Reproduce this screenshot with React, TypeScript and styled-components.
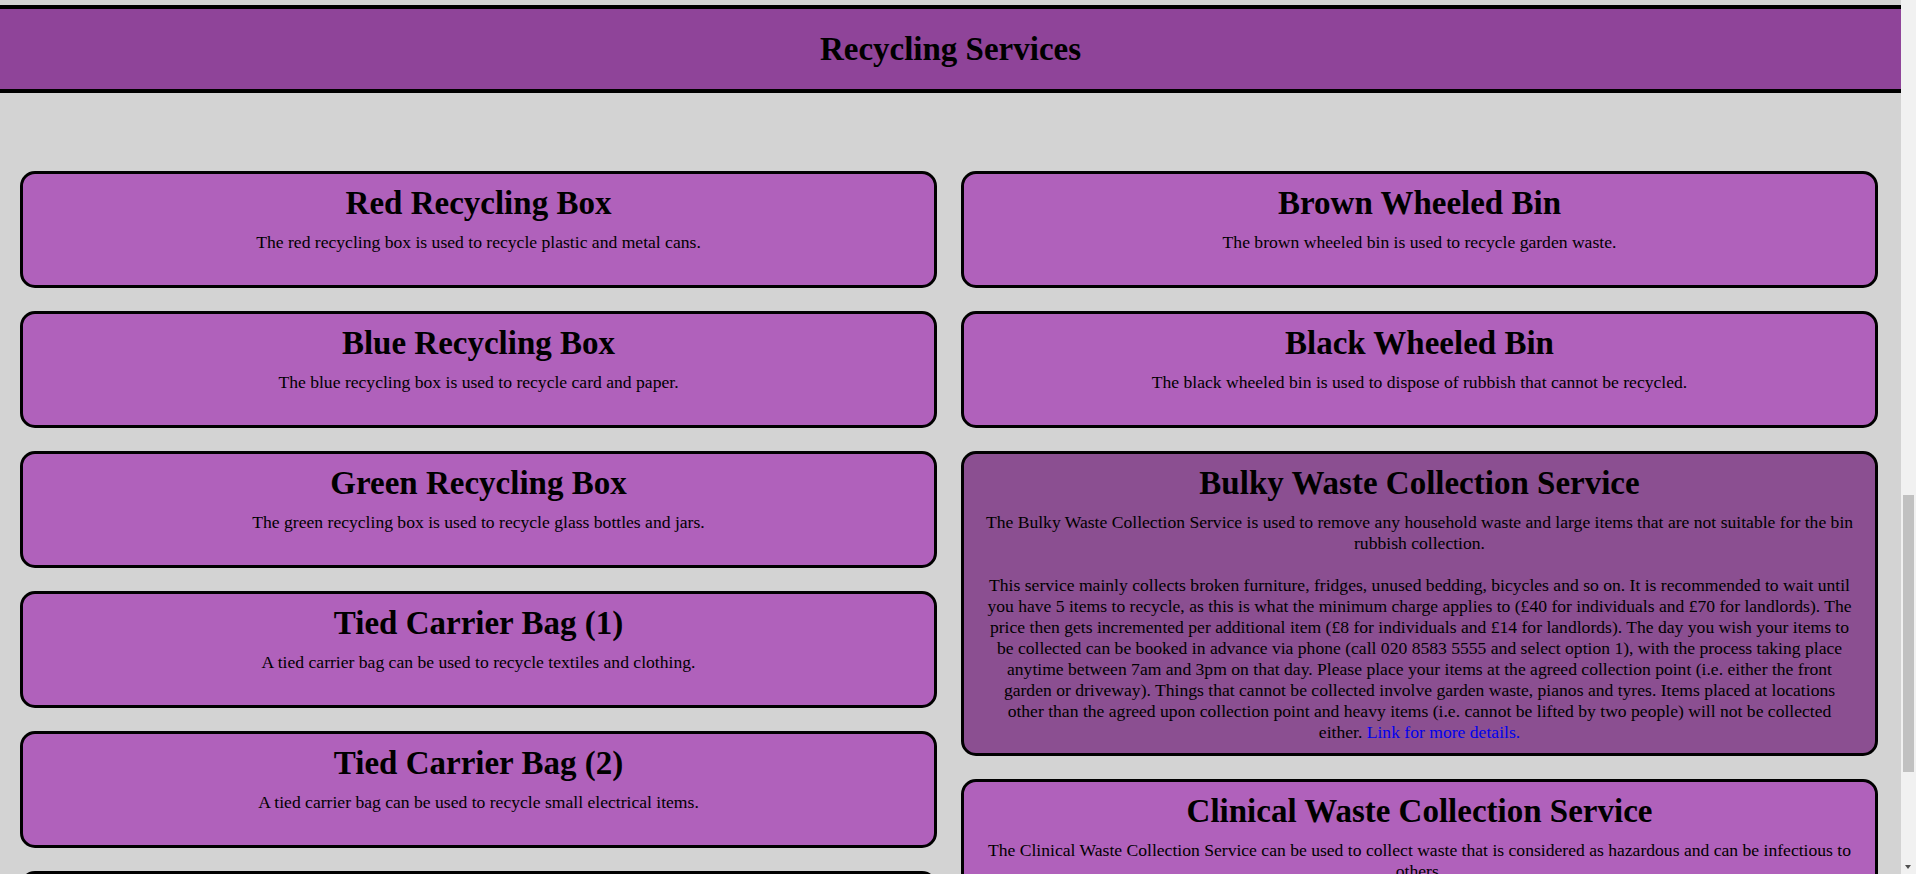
import React from "react";
import styled, { createGlobalStyle } from "styled-components";

const GlobalStyle = createGlobalStyle`
  html, body {
    margin: 0;
    padding: 0;
    background: #d3d3d3;
  }
  body {
    font-family: "Liberation Serif", "Times New Roman", serif;
    color: #000;
  }
`;

const Page = styled.div`
  padding-top: 5px;
  padding-right: 15px;
`;

const Header = styled.header`
  background: #8f4499;
  border-top: 4px solid #000;
  border-bottom: 4px solid #000;
  height: 80px;
  display: flex;
  align-items: center;
  justify-content: center;
`;

const HeaderTitle = styled.h1`
  margin: 0;
  font-size: 33px;
  font-weight: bold;
  line-height: 1;
`;

const Grid = styled.main`
  display: grid;
  grid-template-columns: 1fr 1fr;
  column-gap: 24px;
  align-items: start;
  padding: 78px 23px 40px 20px;
`;

const Column = styled.div`
  display: flex;
  flex-direction: column;
  gap: 23px;
`;

const Card = styled.section<{ $dark?: boolean }>`
  box-sizing: border-box;
  min-height: 117px;
  background: ${(p) => (p.$dark ? "#8b4f91" : "#b061bb")};
  border: 3px solid #000;
  border-radius: 15px;
  padding: 10px 20px 10px;
  text-align: center;
`;

const CardTitle = styled.h2`
  margin: 0 0 10px;
  font-size: 33px;
  line-height: 38px;
  font-weight: bold;
`;

const CardText = styled.p`
  margin: 0;
  font-size: 17.6px;
  line-height: 21px;
`;

const Gap = styled.span`
  display: block;
  height: 21px;
`;

const MoreLink = styled.a`
  color: #0000ee;
  text-decoration: none;
`;

const ScrollTrack = styled.div`
  position: fixed;
  top: 0;
  right: 0;
  width: 15px;
  height: 100vh;
  background: #f1f1f1;
`;

const ScrollThumb = styled.div`
  position: absolute;
  top: 495px;
  left: 2px;
  width: 11px;
  height: 277px;
  background: #c1c1c1;
`;

const ScrollArrowDown = styled.div`
  position: absolute;
  bottom: 5px;
  left: 4px;
  width: 0;
  height: 0;
  border-left: 3.5px solid transparent;
  border-right: 3.5px solid transparent;
  border-top: 4px solid #505050;
`;

type Item = { title: string; text: React.ReactNode; dark?: boolean };

const left: Item[] = [
  { title: "Red Recycling Box", text: "The red recycling box is used to recycle plastic and metal cans." },
  { title: "Blue Recycling Box", text: "The blue recycling box is used to recycle card and paper." },
  { title: "Green Recycling Box", text: "The green recycling box is used to recycle glass bottles and jars." },
  { title: "Tied Carrier Bag (1)", text: "A tied carrier bag can be used to recycle textiles and clothing." },
  { title: "Tied Carrier Bag (2)", text: "A tied carrier bag can be used to recycle small electrical items." },
  { title: "Food Waste Caddy", text: "The food waste caddy is used to recycle food waste." },
];

const right: Item[] = [
  { title: "Brown Wheeled Bin", text: "The brown wheeled bin is used to recycle garden waste." },
  { title: "Black Wheeled Bin", text: "The black wheeled bin is used to dispose of rubbish that cannot be recycled." },
  {
    title: "Bulky Waste Collection Service",
    dark: true,
    text: (
      <>
        The Bulky Waste Collection Service is used to remove any household waste and large items that are not
        suitable for the bin rubbish collection.
        <Gap />
        This service mainly collects broken furniture, fridges, unused bedding, bicycles and so on. It is
        recommended to wait until you have 5 items to recycle, as this is what the minimum charge applies to (£40
        for individuals and £70 for landlords). The price then gets incremented per additional item (£8 for
        individuals and £14 for landlords). The day you wish your items to be collected can be booked in advance
        via phone (call 020 8583 5555 and select option 1), with the process taking place anytime between 7am and
        3pm on that day. Please place your items at the agreed collection point (i.e. either the front garden or
        driveway). Things that cannot be collected involve garden waste, pianos and tyres. Items placed at
        locations other than the agreed upon collection point and heavy items (i.e. cannot be lifted by two
        people) will not be collected either. <MoreLink href="#">Link for more details.</MoreLink>
      </>
    ),
  },
  {
    title: "Clinical Waste Collection Service",
    text: (
      <>
        The Clinical Waste Collection Service can be used to collect waste that is considered as hazardous and can
        be infectious to others.
      </>
    ),
  },
];

const ServiceCard = ({ item }: { item: Item }) => (
  <Card $dark={item.dark}>
    <CardTitle>{item.title}</CardTitle>
    <CardText>{item.text}</CardText>
  </Card>
);

export default function App() {
  return (
    <>
      <GlobalStyle />
      <Page>
        <Header>
          <HeaderTitle>Recycling Services</HeaderTitle>
        </Header>
        <Grid>
          <Column>
            {left.map((it) => (
              <ServiceCard key={it.title} item={it} />
            ))}
          </Column>
          <Column>
            {right.map((it) => (
              <ServiceCard key={it.title} item={it} />
            ))}
          </Column>
        </Grid>
      </Page>
      <ScrollTrack aria-hidden="true">
        <ScrollThumb />
        <ScrollArrowDown />
      </ScrollTrack>
    </>
  );
}
